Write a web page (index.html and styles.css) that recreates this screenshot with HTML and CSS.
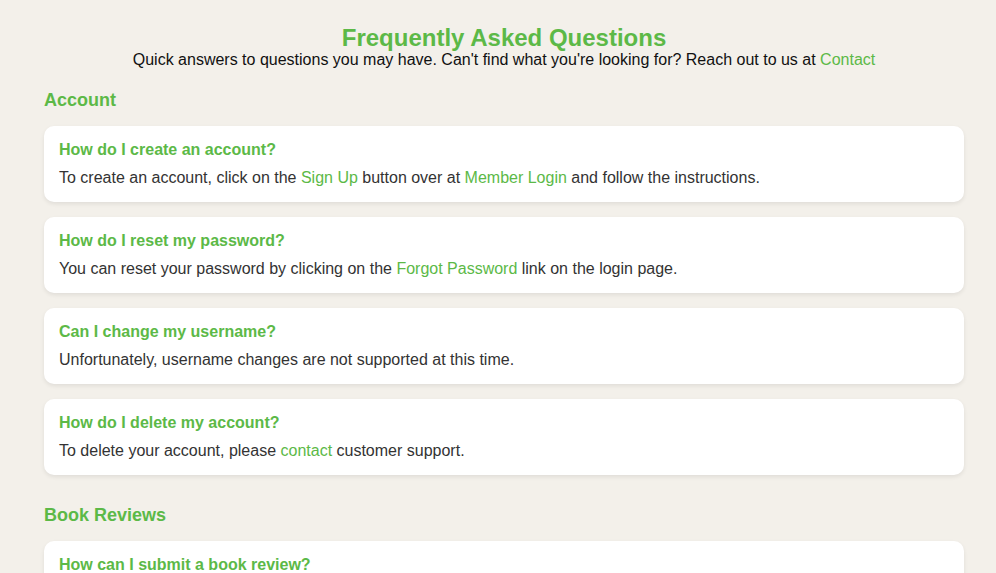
FILE: index.html
```html
<!DOCTYPE html>
<html lang="en">
<head>
<meta charset="utf-8">
<title>FAQ</title>
<link rel="stylesheet" href="styles.css">
</head>
<body>
<main class="container">
  <header class="intro">
    <h1 class="title">Frequently Asked Questions</h1>
    <p class="subtitle">Quick answers to questions you may have. Can't find what you're looking for? Reach out to us at <a class="link" href="#">Contact</a></p>
  </header>

  <section class="faq-section">
    <h2 class="section-title">Account</h2>
    <div class="faq-list">
      <div class="card">
        <h3 class="question">How do I create an account?</h3>
        <p class="answer">To create an account, click on the <a class="link" href="#">Sign Up</a> button over at <a class="link" href="#">Member Login</a> and follow the instructions.</p>
      </div>
      <div class="card">
        <h3 class="question">How do I reset my password?</h3>
        <p class="answer">You can reset your password by clicking on the <a class="link" href="#">Forgot Password</a> link on the login page.</p>
      </div>
      <div class="card">
        <h3 class="question">Can I change my username?</h3>
        <p class="answer">Unfortunately, username changes are not supported at this time.</p>
      </div>
      <div class="card">
        <h3 class="question">How do I delete my account?</h3>
        <p class="answer">To delete your account, please <a class="link" href="#">contact</a> customer support.</p>
      </div>
    </div>
  </section>

  <section class="faq-section">
    <h2 class="section-title">Book Reviews</h2>
    <div class="faq-list">
      <div class="card">
        <h3 class="question">How can I submit a book review?</h3>
      </div>
    </div>
  </section>
</main>
</body>
</html>
```

FILE: styles.css
```css
* { box-sizing: border-box; }

html, body {
  margin: 0;
  padding: 0;
  background: #f3f0ea;
  font-family: "Liberation Sans", Arial, sans-serif;
  color: #333;
}

.container {
  width: 920px;
  margin: 0 32px 0 44px;
  padding: 25px 0 40px;
}

.intro {
  text-align: center;
}

.title {
  margin: 0;
  font-size: 24px;
  line-height: 26px;
  font-weight: bold;
  color: #5cb947;
}

.subtitle {
  margin: 0;
  font-size: 16px;
  line-height: 18px;
  color: #111;
}

.link {
  color: #5cb947;
  text-decoration: none;
}

.faq-section {
  margin-top: 20px;
}

.faq-section + .faq-section {
  margin-top: 29px;
}

.section-title {
  margin: 0 0 15px;
  font-size: 18px;
  line-height: 22px;
  font-weight: bold;
  color: #5cb947;
}

.faq-list {
  display: flex;
  flex-direction: column;
  gap: 15px;
}

.card {
  background: #fff;
  border-radius: 10px;
  padding: 15px 15px;
  box-shadow: 0 2px 4px rgba(0, 0, 0, 0.08);
}

.question {
  margin: 0 0 9px;
  font-size: 16px;
  line-height: 18px;
  font-weight: bold;
  color: #5cb947;
}

.answer {
  margin: 0;
  font-size: 16px;
  line-height: 19px;
  color: #333;
}
```
